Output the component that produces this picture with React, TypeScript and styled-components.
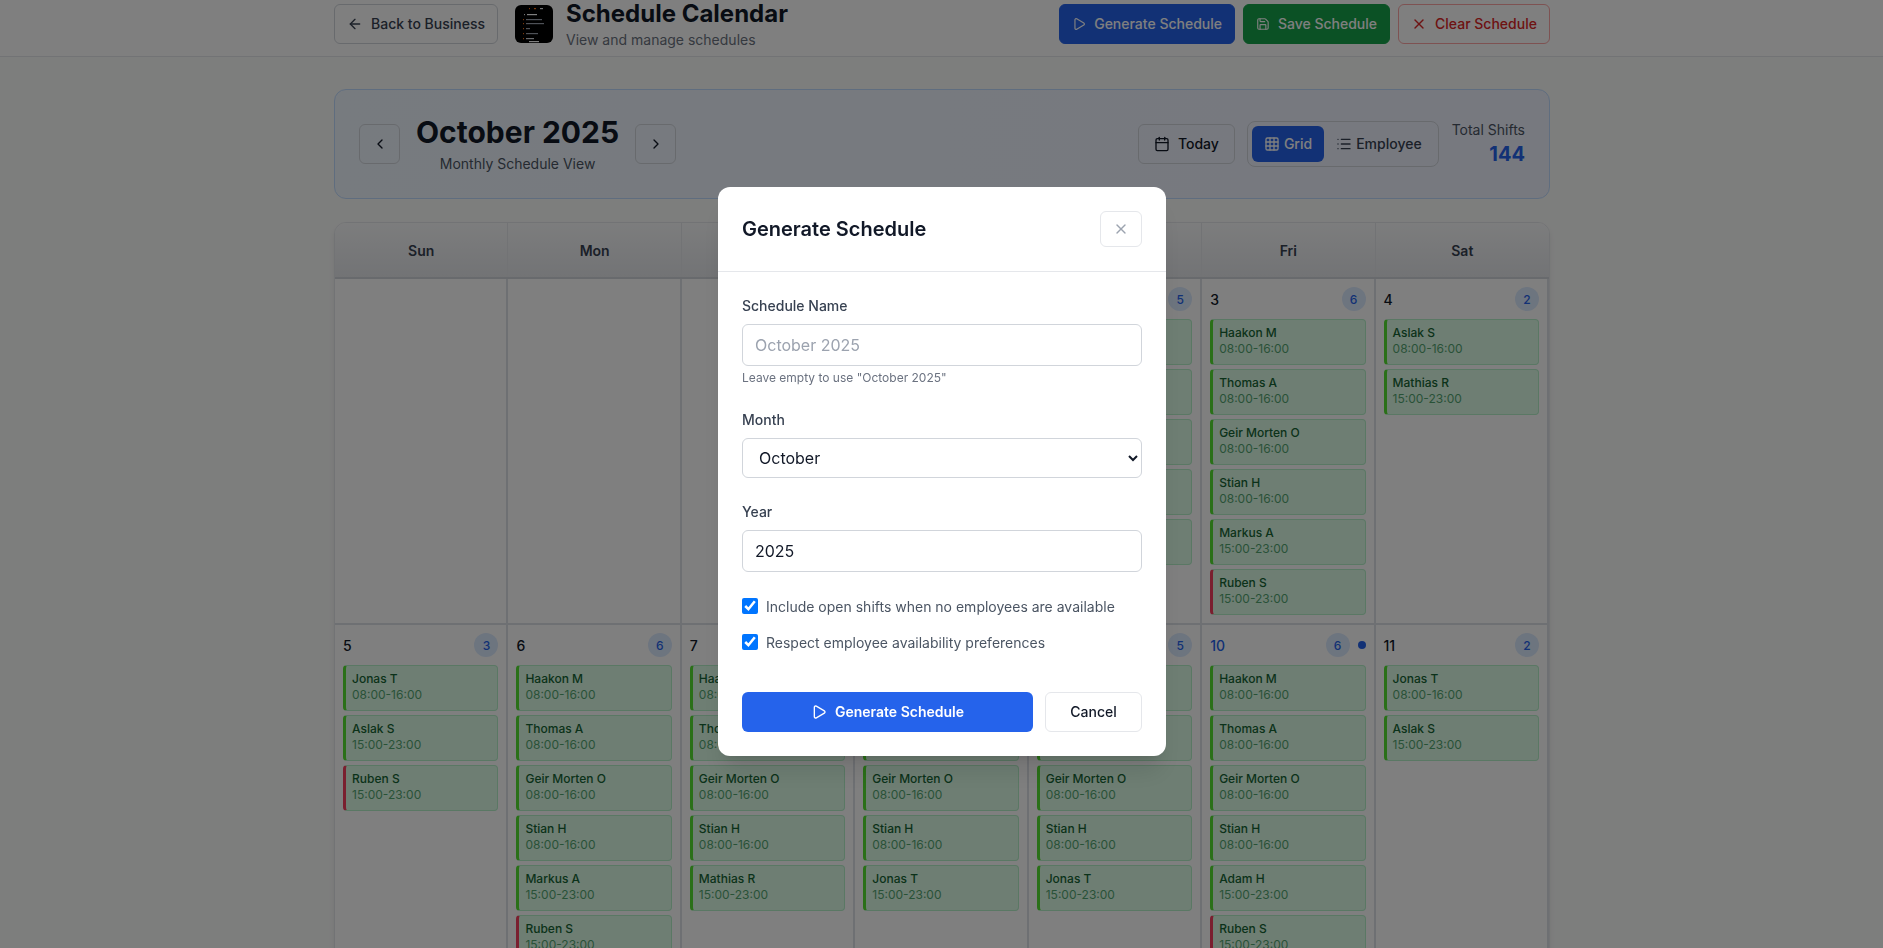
import React, { FC } from 'react'
import styled, { createGlobalStyle } from 'styled-components'
import { ArrowLeft, Calendar, ChevronLeft, ChevronRight, Grid3x3, List, Play, Save, X } from 'lucide-react'

type Shift = { name: string; late?: boolean; open?: boolean }
type Day = { date?: number; today?: boolean; shifts: Shift[] }

const EARLY = '08:00-16:00'
const LATE = '15:00-23:00'

const s = (name: string, late = false, open = false): Shift => ({ name, late, open })

const core = [s('Haakon M'), s('Thomas A'), s('Geir Morten O'), s('Stian H')]

const days: Day[] = [
  { shifts: [] },
  { shifts: [] },
  { shifts: [] },
  { date: 1, shifts: [...core, s('Jonas T', true)] },
  { date: 2, shifts: [...core, s('Jonas T', true)] },
  { date: 3, shifts: [...core, s('Markus A', true), s('Ruben S', true, true)] },
  { date: 4, shifts: [s('Aslak S'), s('Mathias R', true)] },
  { date: 5, shifts: [s('Jonas T'), s('Aslak S', true), s('Ruben S', true, true)] },
  { date: 6, shifts: [...core, s('Markus A', true), s('Ruben S', true, true)] },
  { date: 7, shifts: [...core, s('Mathias R', true)] },
  { date: 8, shifts: [...core, s('Jonas T', true)] },
  { date: 9, shifts: [...core, s('Jonas T', true)] },
  { date: 10, today: true, shifts: [...core, s('Adam H', true), s('Ruben S', true, true)] },
  { date: 11, shifts: [s('Jonas T'), s('Aslak S', true)] },
]

const weekDays = ['Sun', 'Mon', 'Tue', 'Wed', 'Thu', 'Fri', 'Sat']

const GlobalStyle = createGlobalStyle`
  * { box-sizing: border-box; }
  html, body { margin: 0; height: 100%; overflow: hidden; }
  body {
    font-family: Inter, "Noto Sans", sans-serif;
    background: #fff;
    color: #111827;
  }
`

const Page = styled.div`
  height: 948px;
  overflow: hidden;
  background: #fbfcfb;
`

const TopBar = styled.header`
  margin-top: -10px;
  padding: 8px 333px 6px 334px;
  display: flex;
  align-items: center;
  justify-content: space-between;
  background: #fff;
  border-bottom: 1px solid #e5e7eb;
`

const TopLeft = styled.div`
  display: flex;
  align-items: center;
  gap: 16px;
`

const TopActions = styled.div`
  display: flex;
  gap: 8px;
`

const ActionButton = styled.button<{ $tone: 'plain' | 'blue' | 'green' | 'red'; $width?: number }>`
  height: 40px;
  width: ${p => (p.$width ? `${p.$width}px` : 'auto')};
  padding: 0 12px;
  display: flex;
  align-items: center;
  justify-content: center;
  gap: 8px;
  white-space: nowrap;
  font: 500 14px/20px Inter, sans-serif;
  border-radius: 6px;
  border: 1px solid
    ${p => ({ plain: '#d1d5db', blue: '#2563eb', green: '#16a34a', red: '#fca5a5' }[p.$tone])};
  background: ${p => ({ plain: '#fff', blue: '#2563eb', green: '#16a34a', red: '#fff' }[p.$tone])};
  color: ${p => ({ plain: '#374151', blue: '#fff', green: '#fff', red: '#dc2626' }[p.$tone])};
`

const Logo = styled.svg`
  width: 40px;
  height: 40px;
  display: block;
  margin-right: -4px;
`

const TitleBlock = styled.div`
  display: flex;
  flex-direction: column;
`

const PageTitle = styled.h1`
  margin: 0;
  font-size: 24px;
  line-height: 32px;
  font-weight: 700;
  color: #111827;
`

const PageSubtitle = styled.p`
  margin: 0;
  font-size: 14px;
  line-height: 20px;
  color: #6b7280;
`

const Main = styled.main`
  padding: 32px 333px 0 334px;
`

const MonthBar = styled.section`
  height: 110px;
  padding: 0 24px;
  display: flex;
  align-items: center;
  justify-content: space-between;
  border: 1px solid #bfdbfe;
  border-radius: 12px;
  background: linear-gradient(90deg, #eff6ff, #eef2ff);
`

const MonthNav = styled.div`
  display: flex;
  align-items: center;
  gap: 16px;
`

const NavButton = styled.button`
  width: 41px;
  height: 40px;
  display: grid;
  place-items: center;
  padding: 0;
  color: #111827;
  background: transparent;
  border: 1px solid #d1d5db;
  border-radius: 6px;
`

const MonthLabel = styled.div`
  text-align: center;
`

const MonthTitle = styled.h2`
  margin: 0 0 4px;
  font-size: 30px;
  line-height: 36px;
  font-weight: 700;
  color: #111827;
`

const MonthSub = styled.p`
  margin: 0;
  font-size: 14px;
  line-height: 20px;
  color: #4b5563;
`

const MonthTools = styled.div`
  display: flex;
  align-items: center;
  gap: 12px;
`

const TodayButton = styled.button`
  width: 97px;
  height: 40px;
  display: flex;
  align-items: center;
  justify-content: center;
  gap: 8px;
  font: 500 14px/20px Inter, sans-serif;
  color: #111827;
  background: transparent;
  border: 1px solid #d1d5db;
  border-radius: 6px;
`

const ViewToggle = styled.div`
  height: 46px;
  padding: 4px;
  display: flex;
  border: 1px solid #d1d5db;
  border-radius: 8px;
`

const ViewButton = styled.button<{ $active?: boolean }>`
  padding: 0 12px;
  display: flex;
  align-items: center;
  gap: 4px;
  border: 0;
  border-radius: 6px;
  font: 500 14px/20px Inter, sans-serif;
  color: ${p => (p.$active ? '#fff' : '#374151')};
  background: ${p => (p.$active ? '#2563eb' : 'transparent')};
`

const Totals = styled.div`
  margin-left: 1px;
  text-align: right;
`

const TotalsLabel = styled.div`
  font-size: 14px;
  line-height: 20px;
  color: #4b5563;
`

const TotalsValue = styled.div`
  font-size: 20px;
  line-height: 28px;
  font-weight: 700;
  color: #2563eb;
`

const CalendarCard = styled.section`
  margin-top: 23px;
  background: #fff;
  border: 1px solid #e5e7eb;
  border-radius: 12px 12px 0 0;
  box-shadow: 0 4px 6px -1px rgba(0, 0, 0, 0.1);
  overflow: hidden;
`

const WeekRow = styled.div`
  display: grid;
  grid-template-columns: repeat(7, 1fr);
  background: linear-gradient(180deg, #f9fafb, #e5e7eb);
  border-bottom: 2px solid #d1d5db;
`

const WeekDay = styled.div`
  height: 54px;
  display: grid;
  place-items: center;
  font-size: 14px;
  font-weight: 600;
  color: #374151;
  border-right: 1px solid #e5e7eb;

  &:last-child {
    border-right: 0;
  }
`

const DayGrid = styled.div`
  display: grid;
  grid-template-columns: repeat(7, 1fr);
`

const DayCell = styled.div`
  padding: 8px;
  min-height: 344px;
  border-right: 2px solid #dde1e7;
  border-bottom: 2px solid #dde1e7;
`

const DayHead = styled.div`
  height: 24px;
  margin-bottom: 8px;
  display: flex;
  align-items: center;
  gap: 8px;
`

const DayNumber = styled.span<{ $today?: boolean }>`
  margin-right: auto;
  font-size: 14px;
  font-weight: 500;
  color: ${p => (p.$today ? '#2563eb' : '#111827')};
`

const CountBadge = styled.span`
  width: 24px;
  height: 24px;
  display: grid;
  place-items: center;
  border-radius: 50%;
  font-size: 12px;
  font-weight: 500;
  color: #2563eb;
  background: #dbeafe;
`

const TodayDot = styled.span`
  width: 8px;
  height: 8px;
  border-radius: 50%;
  background: #2563eb;
`

const ShiftList = styled.div`
  display: flex;
  flex-direction: column;
  gap: 4px;
`

const ShiftCard = styled.div<{ $open?: boolean }>`
  height: 46px;
  padding: 4px 6px;
  background: #dcfce7;
  border: 1px solid #b4f0c8;
  border-left: 3px solid ${p => (p.$open ? '#f43f5e' : '#55e030')};
  border-radius: 4px;
`

const ShiftName = styled.div`
  font-size: 12px;
  line-height: 17px;
  font-weight: 500;
  color: #166534;
`

const ShiftTime = styled.div`
  font-size: 12px;
  line-height: 16px;
  color: #15803d;
  opacity: 0.7;
`

const Overlay = styled.div`
  position: fixed;
  inset: 0;
  background: rgba(0, 0, 0, 0.5);
`

const Modal = styled.form`
  position: absolute;
  left: 718px;
  top: 187px;
  width: 448px;
  height: 569px;
  background: #fff;
  border-radius: 12px;
  box-shadow: 0 20px 25px -5px rgba(0, 0, 0, 0.1), 0 8px 10px -6px rgba(0, 0, 0, 0.1);
`

const ModalHeader = styled.div`
  height: 85px;
  padding: 0 24px;
  display: flex;
  align-items: center;
  justify-content: space-between;
  border-bottom: 1px solid #e5e7eb;
`

const ModalTitle = styled.h3`
  margin: 0;
  font-size: 20px;
  line-height: 28px;
  font-weight: 600;
  color: #111827;
`

const CloseButton = styled.button`
  width: 42px;
  height: 36px;
  display: grid;
  place-items: center;
  padding: 0;
  color: #9ca3af;
  background: #fff;
  border: 1px solid #e5e7eb;
  border-radius: 6px;
`

const ModalBody = styled.div`
  padding: 24px 24px 0;
  display: flex;
  flex-direction: column;
`

const Field = styled.div`
  margin-bottom: 24px;
`

const FieldLabel = styled.label`
  display: block;
  margin-bottom: 8px;
  font-size: 14px;
  line-height: 20px;
  font-weight: 500;
  color: #374151;
`

const TextInput = styled.input`
  display: block;
  width: 100%;
  height: 42px;
  padding: 0 12px;
  font: 400 16px Inter, sans-serif;
  color: #111827;
  background: #fff;
  border: 1px solid #d1d5db;
  border-radius: 6px;
  outline: none;

  &::placeholder {
    color: #9ca3af;
  }
`

const MonthSelect = styled.select`
  display: block;
  width: 100%;
  height: 40px;
  padding: 0 12px;
  font: 400 16px Inter, sans-serif;
  color: #111827;
  background: #fff;
  border: 1px solid #d1d5db;
  border-radius: 6px;
`

const Hint = styled.p`
  margin: 4px 0 0;
  font-size: 12px;
  line-height: 16px;
  color: #6b7280;
`

const CheckRow = styled.label`
  height: 20px;
  margin-bottom: 16px;
  display: flex;
  align-items: center;
  gap: 8px;
  font-size: 14px;
  color: #4b5563;
`

const Check = styled.input`
  width: 16px;
  height: 16px;
  margin: 0;
  accent-color: #0075ff;
`

const ModalActions = styled.div`
  margin-top: 24px;
  display: flex;
  gap: 12px;
`

const PrimaryButton = styled.button`
  flex: 1;
  height: 40px;
  display: flex;
  align-items: center;
  justify-content: center;
  gap: 8px;
  font: 600 14px/20px Inter, sans-serif;
  color: #fff;
  background: #2563eb;
  border: 0;
  border-radius: 6px;
`

const CancelButton = styled.button`
  width: 97px;
  height: 40px;
  font: 500 14px/20px Inter, sans-serif;
  color: #111827;
  background: #fff;
  border: 1px solid #e5e7eb;
  border-radius: 6px;
`

const dots: [number, number, number, string][] = [
  [15, 4, 1, '#f97316'], [20, 4, 2, '#f97316'], [26, 4, 3, '#e5e7eb'],
  [10, 10, 1, '#e5e7eb'], [13, 10, 10, '#fff'],
  [9, 15, 1, '#f97316'], [12, 15, 16, '#9ca3af'],
  [9, 19, 1, '#f97316'], [12, 19, 18, '#9ca3af'],
  [9, 24, 1, '#f97316'], [12, 24, 4, '#9ca3af'],
  [9, 29, 1, '#f97316'], [12, 29, 12, '#9ca3af'],
  [9, 34, 1, '#f97316'], [12, 34, 8, '#d1d5db'], [15, 37, 10, '#fff'],
]

const AppLogo: FC = () => (
  <Logo viewBox='0 0 40 40'>
    <rect x='1' y='1' width='38' height='38' rx='6' fill='#000' />
    {dots.map(([x, y, w, fill], i) => (
      <rect key={i} x={x} y={y} width={w} height='1.2' fill={fill} />
    ))}
  </Logo>
)

export default function App() {
  return (
    <Page>
      <GlobalStyle />
      <TopBar>
        <TopLeft>
          <ActionButton $tone='plain' type='button'>
            <ArrowLeft size={16} />
            Back to Business
          </ActionButton>
          <AppLogo />
          <TitleBlock>
            <PageTitle>Schedule Calendar</PageTitle>
            <PageSubtitle>View and manage schedules</PageSubtitle>
          </TitleBlock>
        </TopLeft>
        <TopActions>
          <ActionButton $tone='blue' $width={176} type='button'>
            <Play size={16} />
            Generate Schedule
          </ActionButton>
          <ActionButton $tone='green' $width={147} type='button'>
            <Save size={16} />
            Save Schedule
          </ActionButton>
          <ActionButton $tone='red' $width={152} type='button'>
            <X size={16} />
            Clear Schedule
          </ActionButton>
        </TopActions>
      </TopBar>

      <Main>
        <MonthBar>
          <MonthNav>
            <NavButton type='button'>
              <ChevronLeft size={16} />
            </NavButton>
            <MonthLabel>
              <MonthTitle>October 2025</MonthTitle>
              <MonthSub>Monthly Schedule View</MonthSub>
            </MonthLabel>
            <NavButton type='button'>
              <ChevronRight size={16} />
            </NavButton>
          </MonthNav>
          <MonthTools>
            <TodayButton type='button'>
              <Calendar size={16} />
              Today
            </TodayButton>
            <ViewToggle>
              <ViewButton $active type='button'>
                <Grid3x3 size={16} />
                Grid
              </ViewButton>
              <ViewButton type='button'>
                <List size={16} />
                Employee
              </ViewButton>
            </ViewToggle>
            <Totals>
              <TotalsLabel>Total Shifts</TotalsLabel>
              <TotalsValue>144</TotalsValue>
            </Totals>
          </MonthTools>
        </MonthBar>

        <CalendarCard>
          <WeekRow>
            {weekDays.map(d => (
              <WeekDay key={d}>{d}</WeekDay>
            ))}
          </WeekRow>
          <DayGrid>
            {days.map((day, i) => (
              <DayCell key={i}>
                {day.date && (
                  <DayHead>
                    <DayNumber $today={day.today}>{day.date}</DayNumber>
                    <CountBadge>{day.shifts.length}</CountBadge>
                    {day.today && <TodayDot />}
                  </DayHead>
                )}
                <ShiftList>
                  {day.shifts.map((shift, j) => (
                    <ShiftCard key={j} $open={shift.open}>
                      <ShiftName>{shift.name}</ShiftName>
                      <ShiftTime>{shift.late ? LATE : EARLY}</ShiftTime>
                    </ShiftCard>
                  ))}
                </ShiftList>
              </DayCell>
            ))}
          </DayGrid>
        </CalendarCard>
      </Main>

      <Overlay>
        <Modal onSubmit={e => e.preventDefault()}>
          <ModalHeader>
            <ModalTitle>Generate Schedule</ModalTitle>
            <CloseButton type='button'>
              <X size={16} />
            </CloseButton>
          </ModalHeader>
          <ModalBody>
            <Field>
              <FieldLabel>Schedule Name</FieldLabel>
              <TextInput placeholder='October 2025' />
              <Hint>Leave empty to use "October 2025"</Hint>
            </Field>
            <Field>
              <FieldLabel>Month</FieldLabel>
              <MonthSelect defaultValue='October'>
                <option>October</option>
                <option>November</option>
              </MonthSelect>
            </Field>
            <Field>
              <FieldLabel>Year</FieldLabel>
              <TextInput defaultValue='2025' />
            </Field>
            <CheckRow>
              <Check type='checkbox' defaultChecked />
              Include open shifts when no employees are available
            </CheckRow>
            <CheckRow>
              <Check type='checkbox' defaultChecked />
              Respect employee availability preferences
            </CheckRow>
            <ModalActions>
              <PrimaryButton type='button'>
                <Play size={16} />
                Generate Schedule
              </PrimaryButton>
              <CancelButton type='button'>Cancel</CancelButton>
            </ModalActions>
          </ModalBody>
        </Modal>
      </Overlay>
    </Page>
  )
}
